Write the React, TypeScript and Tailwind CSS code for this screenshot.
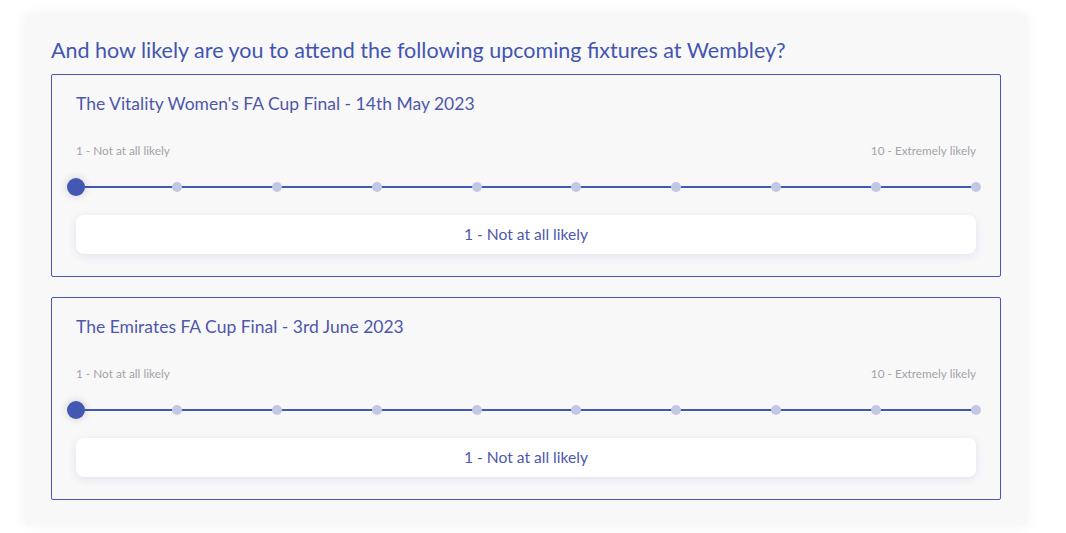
import React from "react";

const font = { fontFamily: "Lato, 'Open Sans', sans-serif" };

const positions = [
  "left-[0%]",
  "left-[11.111%]",
  "left-[22.222%]",
  "left-[33.333%]",
  "left-[44.444%]",
  "left-[55.556%]",
  "left-[66.667%]",
  "left-[77.778%]",
  "left-[88.889%]",
  "left-[100%]",
];

function Question({ title }: { title: string }) {
  return (
    <div className="border border-[#4a58b5] rounded-[2px] px-[24px] pt-[18px] pb-[22px]">
      <div className="text-[17.5px] leading-[22px] text-[#4f57a8]">{title}</div>
      <div className="flex justify-between mt-[29px] text-[11.8px] leading-[14px] text-[#a3a3a8]">
        <span>1 - Not at all likely</span>
        <span>10 - Extremely likely</span>
      </div>
      <div className="relative h-[18px] mt-[20px] ml-[1px]">
        <div className="absolute -left-[1px] right-0 top-[8px] h-[2px] bg-[#4358b3]" />
        {positions.map((p, i) =>
          i === 0 ? (
            <div
              key={i}
              className={`absolute top-0 ${p} -translate-x-1/2 -ml-[1px] w-[18px] h-[18px] rounded-full bg-[#4358b3] shadow-[0_0_8px_rgba(0,0,0,0.18)] z-10`}
            />
          ) : (
            <div
              key={i}
              className={`absolute top-[4px] ${p} -translate-x-1/2 w-[10px] h-[10px] rounded-full bg-[#c2c7e3]`}
            />
          )
        )}
      </div>
      <div className="mt-[19px] h-[39px] bg-white rounded-[8px] shadow-[0_2px_8px_rgba(60,70,140,0.12)] flex items-center justify-center text-[15.6px] text-[#4c59ad]">
        1 - Not at all likely
      </div>
    </div>
  );
}

export default function App() {
  return (
    <div className="w-[1066px] h-[533px] bg-white pt-[15px] pl-[25px]" style={font}>
      <div className="w-[1002px] h-[510px] bg-[#f8f8f9] shadow-[0_0_14px_rgba(0,0,0,0.06)] pl-[26px] pr-[26px] pt-[22px]">
        <h1 className="text-[21.5px] leading-[26px] text-[#4355b0] mb-[11px]">
          And how likely are you to attend the following upcoming fixtures at Wembley?
        </h1>
        <div className="flex flex-col gap-[20px]">
          <Question title="The Vitality Women's FA Cup Final - 14th May 2023" />
          <Question title="The Emirates FA Cup Final - 3rd June 2023" />
        </div>
      </div>
    </div>
  );
}
